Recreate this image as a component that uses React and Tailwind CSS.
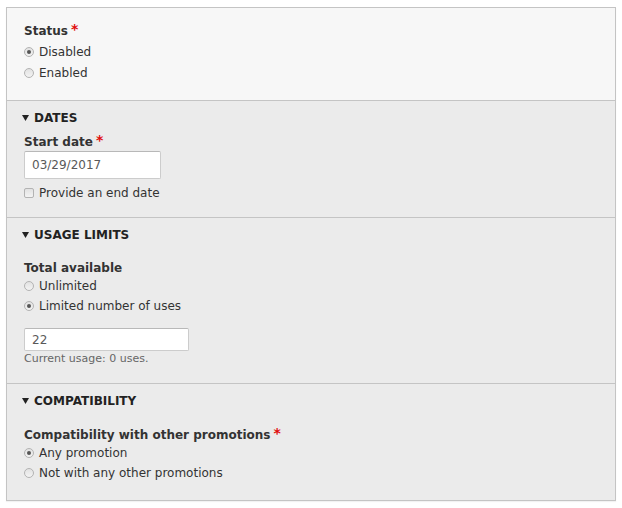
import { useState } from "react";

const FONT = { fontFamily: '"DejaVu Sans", Verdana, sans-serif' };

function Req() {
  return <span className="relative -top-[2px] ml-[3px] text-[14px] font-bold leading-none text-[#e00b0b]">*</span>;
}

function Radio({ label, checked, onChange }) {
  return (
    <label className="flex h-[20px] items-center text-[12px] text-[#333]" onClick={onChange}>
      <span className="mr-[5px] flex h-[10px] w-[10px] items-center justify-center rounded-full border border-[#b3b3b3] bg-gradient-to-b from-[#e2e2e2] to-[#f3f3f3]">
        {checked && <span className="h-[4px] w-[4px] rounded-full bg-[#555]" />}
      </span>
      {label}
    </label>
  );
}

function Checkbox({ label, checked, onChange }) {
  return (
    <label className="flex h-[20px] items-center text-[12px] text-[#333]" onClick={onChange}>
      <span className="mr-[5px] h-[10px] w-[10px] rounded-[2px] border border-[#b3b3b3] bg-gradient-to-b from-[#e2e2e2] to-[#f3f3f3]">
        {checked && <span className="block h-full w-full rounded-[1px] bg-[#555]" />}
      </span>
      {label}
    </label>
  );
}

function Section({ title, children, className = "" }) {
  return (
    <div className={`border-t border-[#c4c4c4] bg-[#ebebeb] px-[17px] ${className}`}>
      <div className="flex h-[18px] items-center text-[12px] font-bold uppercase text-[#222]">
        <svg width="7" height="6" viewBox="0 0 7 6" className="mr-[5px] ml-[-2px]">
          <path d="M0 0 H7 L3.5 6 Z" fill="#222" />
        </svg>
        {title}
      </div>
      {children}
    </div>
  );
}

export default function App() {
  const [status, setStatus] = useState("disabled");
  const [endDate, setEndDate] = useState(false);
  const [limit, setLimit] = useState("limited");
  const [compat, setCompat] = useState("any");

  return (
    <div className="h-[508px] w-[622px] bg-white pl-[6px] pt-[7px]" style={FONT}>
      <div className="w-[610px] border border-[#c4c4c4] shadow-[0_1px_1px_rgba(0,0,0,0.05)]">
        {/* status */}
        <div className="bg-[#f7f7f7] px-[17px] pb-[17px] pt-[14px]">
          <div className="flex h-[18px] items-center text-[12px] font-bold text-[#333]">
            Status
            <Req />
          </div>
          <div className="mt-[2px]">
            <Radio label="Disabled" checked={status === "disabled"} onChange={() => setStatus("disabled")} />
            <div className="h-[1px]" />
            <Radio label="Enabled" checked={status === "enabled"} onChange={() => setStatus("enabled")} />
          </div>
        </div>

        <Section title="Dates" className="pb-[14px] pt-[8px]">
          <div className="mt-[6px] flex h-[18px] items-center text-[12px] font-bold text-[#333]">
            Start date
            <Req />
          </div>
          <input
            defaultValue="03/29/2017"
            className="h-[28px] w-[137px] rounded-[2px] border border-[#ccc] border-t-[#b8b8b8] bg-white px-[7px] text-[12px] text-[#595959] outline-none"
            style={FONT}
          />
          <div className="mt-[4px]">
            <Checkbox label="Provide an end date" checked={endDate} onChange={() => setEndDate(!endDate)} />
          </div>
        </Section>

        <Section title="Usage limits" className="pb-[17px] pt-[8px]">
          <div className="mt-[15px] flex h-[17px] items-center text-[12px] font-bold text-[#333]">Total available</div>
          <Radio label="Unlimited" checked={limit === "unlimited"} onChange={() => setLimit("unlimited")} />
          <Radio label="Limited number of uses" checked={limit === "limited"} onChange={() => setLimit("limited")} />
          <input
            defaultValue="22"
            className="mt-[12px] block h-[23px] w-[165px] rounded-[2px] border border-[#ccc] border-t-[#b8b8b8] bg-white px-[7px] text-[12px] text-[#595959] outline-none"
            style={FONT}
          />
          <div className="mt-[1px] flex h-[14px] items-center text-[11px] text-[#666]">Current usage: 0 uses.</div>
        </Section>

        <Section title="Compatibility" className="pb-[17px] pt-[8px]">
          <div className="mt-[16px] flex h-[17px] items-center text-[12px] font-bold text-[#333]">
            Compatibility with other promotions
            <Req />
          </div>
          <Radio label="Any promotion" checked={compat === "any"} onChange={() => setCompat("any")} />
          <Radio label="Not with any other promotions" checked={compat === "none"} onChange={() => setCompat("none")} />
        </Section>
      </div>
    </div>
  );
}
